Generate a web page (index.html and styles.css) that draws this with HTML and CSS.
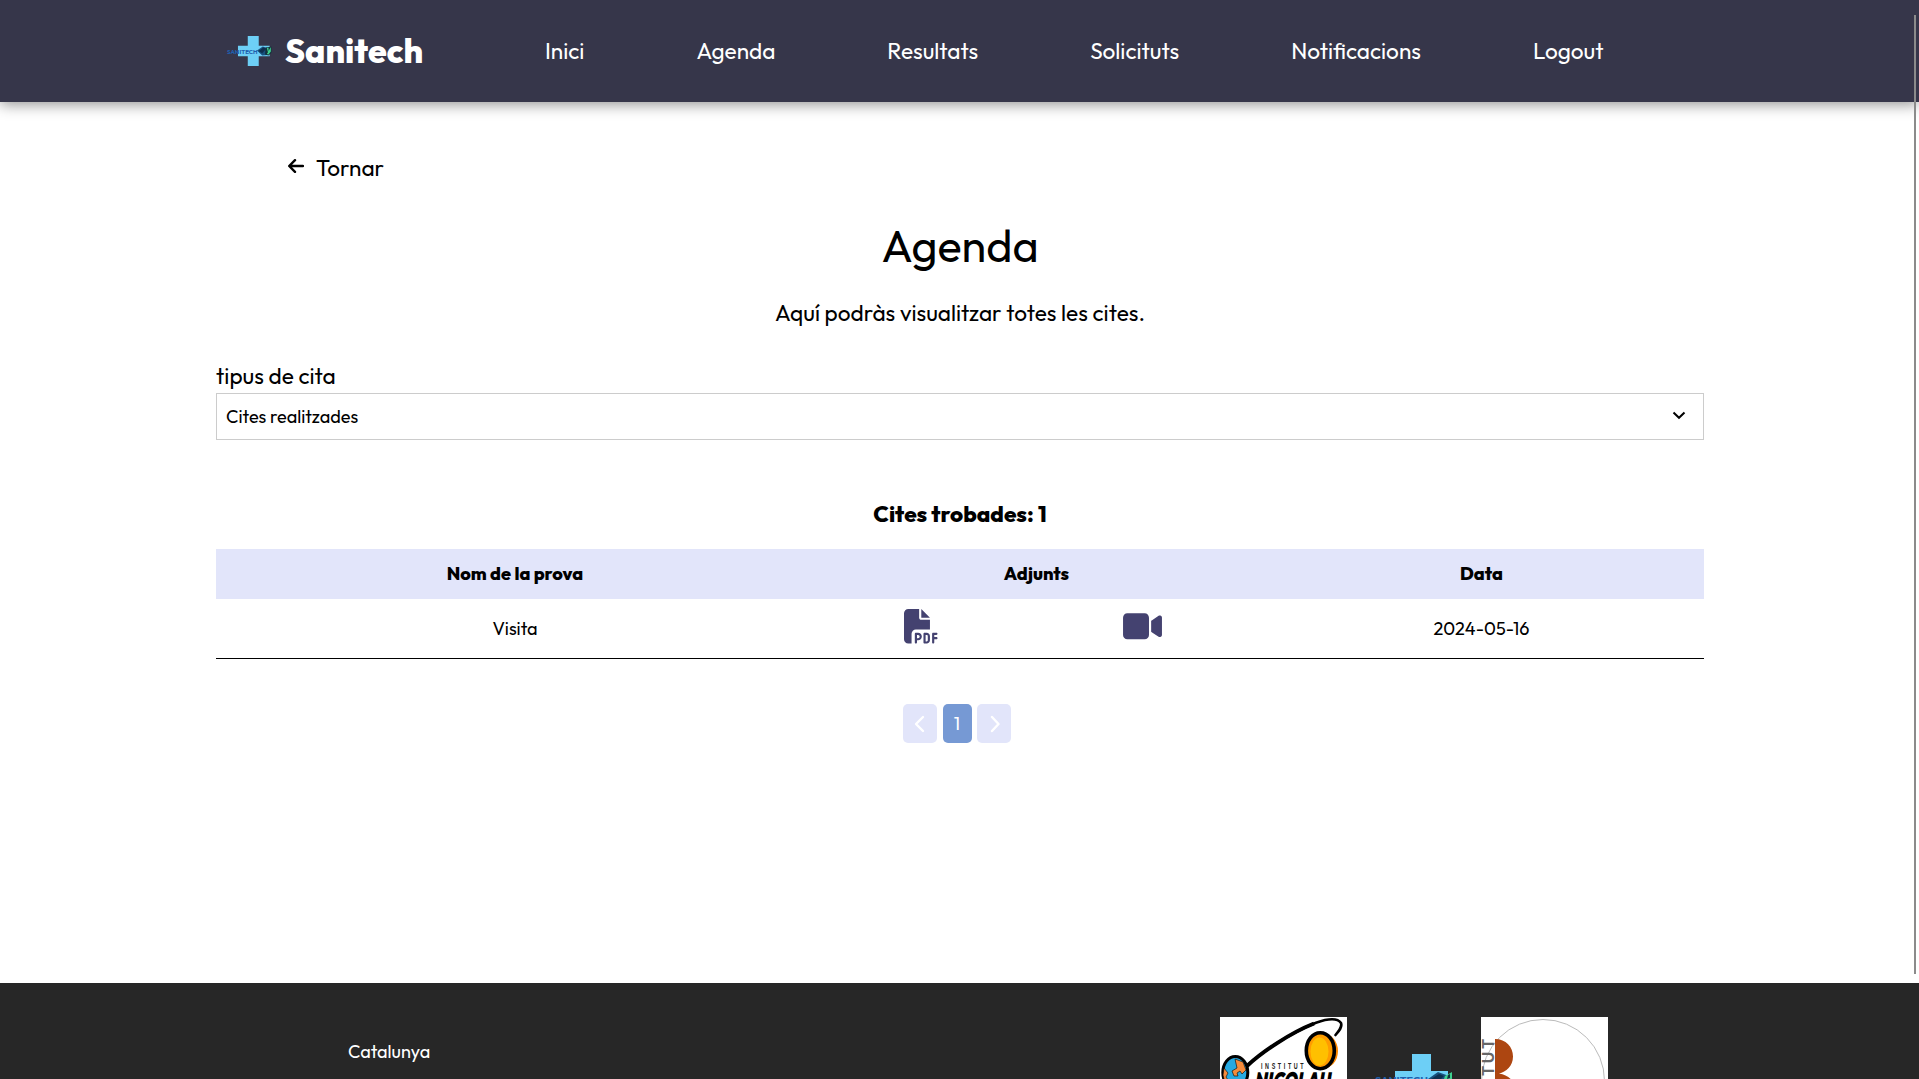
FILE: index.html
```
<!DOCTYPE html>
<html lang="ca">
<head>
<meta charset="utf-8">
<title>Sanitech - Agenda</title>
<link rel="stylesheet" href="styles.css">
</head>
<body>
<header class="header">
  <a class="brand">
    <svg class="brand-logo" viewBox="0 0 80 52">
      <path fill="#6dcff6" d="M37 0H56V17H75V35H56V52H37V35H20V17H37Z"/>
      <text x="1" y="30.5" class="mark-text" textLength="53" lengthAdjust="spacingAndGlyphs">SANITECH</text>
      <path fill="#17517e" d="M53 25L63 18L74 22L71 33L62 34Z"/>
      <path fill="#0d2f4f" d="M56 26L64 20L69 22L62 30Z"/>
      <path fill="#12303c" d="M68 20L78 18V29L73 34L67 32Z"/>
      <path fill="#3ecf8e" d="M70 21L73 20V26L77 19V27L73 32L70 31L72 28Z"/>
    </svg>
    <span>Sanitech</span>
  </a>
  <nav class="nav">
    <a>Inici</a><a>Agenda</a><a>Resultats</a><a>Solicituts</a><a>Notificacions</a><a>Logout</a>
  </nav>
</header>

<main class="main">
  <a class="back">
    <svg width="16" height="14" viewBox="0 0 16 14"><path d="M15 7H1.5M7 1.2L1.2 7L7 12.8" fill="none" stroke="#000" stroke-width="2.4" stroke-linecap="round" stroke-linejoin="round"/></svg>
    <span>Tornar</span>
  </a>
  <h1 class="title">Agenda</h1>
  <p class="intro">Aquí podràs visualitzar totes les cites.</p>
  <label class="label">tipus de cita</label>
  <div class="select">
    <span>Cites realitzades</span>
    <svg width="14" height="9" viewBox="0 0 14 9"><path d="M1.5 1.5L7 6.8L12.5 1.5" fill="none" stroke="#000" stroke-width="2"/></svg>
  </div>
  <h2 class="count">Cites trobades: 1</h2>
  <div class="table">
    <div class="row head"><span>Nom de la prova</span><span>Adjunts</span><span>Data</span></div>
    <div class="row">
      <span>Visita</span>
      <span class="files">
        <svg width="34.6" height="34.6" viewBox="0 0 512 512"><path fill="#444270" d="M0 64C0 28.7 28.7 0 64 0H224V128c0 17.7 14.3 32 32 32H384V304H176c-35.3 0-64 28.7-64 64V512H64c-35.3 0-64-28.7-64-64V64zm384 64H256V0L384 128zM176 352h32c30.9 0 56 25.1 56 56s-25.1 56-56 56H192v32c0 8.8-7.2 16-16 16s-16-7.2-16-16V448 368c0-8.8 7.2-16 16-16zm32 80c13.3 0 24-10.7 24-24s-10.7-24-24-24H192v48h16zm96-80h32c26.5 0 48 21.5 48 48v64c0 26.5-21.5 48-48 48H304c-8.8 0-16-7.2-16-16V368c0-8.8 7.2-16 16-16zm32 128c8.8 0 16-7.2 16-16V400c0-8.8-7.2-16-16-16H320v96h16zm80-112c0-8.8 7.2-16 16-16h48c8.8 0 16 7.2 16 16s-7.2 16-16 16H448v32h32c8.8 0 16 7.2 16 16s-7.2 16-16 16H448v48c0 8.8-7.2 16-16 16s-16-7.2-16-16V432 368z"/></svg>
        <svg width="39" height="34.6" viewBox="0 0 576 512"><path fill="#444270" d="M0 128C0 92.7 28.7 64 64 64H320c35.3 0 64 28.7 64 64V384c0 35.3-28.7 64-64 64H64c-35.3 0-64-28.7-64-64V128zM559.1 99.8c10.4 5.6 16.9 16.4 16.9 28.2V384c0 11.8-6.5 22.6-16.9 28.2s-23 5-32.9-1.6l-96-64L416 337.1V320 192 174.9l14.2-9.5 96-64c9.8-6.5 22.4-7.2 32.9-1.6z"/></svg>
      </span>
      <span>2024-05-16</span>
    </div>
  </div>
  <div class="pages">
    <a class="page"><svg width="12" height="18" viewBox="0 0 12 18"><path d="M9 2L2 9L9 16" fill="none" stroke="#fff" stroke-width="2.4" stroke-linecap="round" stroke-linejoin="round"/></svg></a>
    <a class="page current">1</a>
    <a class="page"><svg width="12" height="18" viewBox="0 0 12 18"><path d="M4 2L10.500 9L4 16" fill="none" stroke="#fff" stroke-width="2.4" stroke-linecap="round" stroke-linejoin="round"/></svg></a>
  </div>
</main>

<footer class="footer">
  <span class="place">Catalunya</span>
  <div class="partners">
    <svg width="127" height="62" viewBox="0 0 127 62">
      <rect width="127" height="62" fill="#fff"/>
      <ellipse cx="103.5" cy="34" rx="14.5" ry="17.5" fill="#ff8a00"/>
      <ellipse cx="100.3" cy="33.7" rx="14" ry="18" fill="#ff9c00" stroke="#000" stroke-width="3.6"/>
      <ellipse cx="99.5" cy="34.5" rx="9" ry="14" fill="#ffc000"/>
      <path d="M27 49C42 35 70 16 96 5.700C110 .8 118 1.500 121 6C122.500 10 119 14 115.500 18" fill="none" stroke="#000" stroke-width="2.600" stroke-linecap="round"/>
      <path d="M27 49C42 35 70 16 94 6.500" fill="none" stroke="#000" stroke-width="4"/>
      <ellipse cx="15.300" cy="55.500" rx="12.500" ry="16" fill="#27a9e1" stroke="#000" stroke-width="3"/>
      <path fill="#f58b3c" stroke="#000" stroke-width=".6" d="M15 42L23 45L26 53L22 57L20 54L17 56L18 59L14 59L12 54L17 51ZM4 51L8 56L6 60L10 66H5L3 58Z"/>
      <text transform="translate(41 52.300) scale(.6 1)" class="institute" textLength="71">INSTITUT</text>
      <text x="34" y="73" class="copernic" textLength="76" lengthAdjust="spacingAndGlyphs">NICOLAU</text>
    </svg>
    <div class="partner-mid">
      <svg width="80" height="25" viewBox="0 0 80 25">
        <path fill="#6dcff6" d="M37 0H56V17H73V25H20V17H37Z"/>
        <text x="0" y="30" class="mark-text" textLength="53" lengthAdjust="spacingAndGlyphs">SANITECH</text>
        <path fill="#17517e" d="M53 25L63 18L74 22L71 33L62 34Z"/>
        <path fill="#0d2f4f" d="M56 25L64 20L69 22L64 27Z"/>
        <path fill="#3ecf8e" d="M70 22L77 18V25H69Z"/>
        <path fill="#12303c" d="M73 21L75 20V24L72 25Z"/>
      </svg>
    </div>
    <svg width="127" height="62" viewBox="0 0 127 62">
      <rect width="127" height="62" fill="#fff"/>
      <circle cx="62" cy="64" r="61.500" fill="none" stroke="#bbb"/>
      <text transform="translate(12.500 114) rotate(-90)" class="vertical" textLength="92">INSTITUT</text>
      <path fill="#ad4611" d="M14 22C25 22 32 30 32 39.500S25 55 18 56.500C28 58 35 65 35 75S28 92 14 92Z"/>
    </svg>
  </div>
</footer>
<div class="scrollbar"></div>
</body>
</html>
```

FILE: styles.css
```
* { box-sizing: border-box; }
body {
  margin: 0;
  height: 1079px;
  overflow: hidden;
  display: flex;
  flex-direction: column;
  background: #fff;
  color: #000;
  font: 18.1px/1.26 Outfit, Lato, sans-serif;
}
svg { display: block; flex: none; }

.header {
  flex: none;
  height: 102px;
  padding-left: 226px;
  display: flex;
  align-items: center;
  background: #36364a;
  color: #fff;
  box-shadow: 0 2px 14px rgba(0, 0, 0, .45);
}
.brand {
  width: 319px;
  display: flex;
  align-items: center;
  gap: 12px;
  font-size: 33.75px;
  font-weight: 800;
}
.brand-logo { width: 47px; height: 30px; }
.nav { display: flex; gap: 112px; font-size: 22.6px; }
.mark-text { font: 700 9.5px Outfit, sans-serif; fill: #1f5fae; }

.main {
  flex: none;
  height: 881px;
  padding: 52px 0 0 216px;
  display: flex;
  flex-direction: column;
}
.main > * { width: 1488px; }
.back {
  padding-left: 72px;
  height: 29px;
  display: flex;
  gap: 12px;
  font-size: 22.6px;
}
.back svg { margin-top: 5px; }
.title {
  margin: 35px 0 0;
  height: 57px;
  font-size: 45px;
  font-weight: 400;
  text-align: center;
}
.intro {
  margin: 24px 0 0;
  height: 29px;
  font-size: 22.6px;
  text-align: center;
}
.label { margin-top: 34px; height: 31px; font-size: 22.6px; }
.select {
  height: 47px;
  padding: 1px 17px 0 9px;
  border: 1px solid #ccc;
  display: flex;
  align-items: center;
  justify-content: space-between;
}
.select svg { margin-bottom: 3px; }
.count {
  margin: 60px 0 0;
  height: 49px;
  font-size: 22.5px;
  font-weight: 800;
  text-align: center;
}
.row {
  height: 60px;
  padding-top: 1px;
  display: grid;
  grid-template-columns: 598px 445px 445px;
  align-items: center;
  text-align: center;
  border-bottom: 1px solid #000;
}
.head {
  height: 50px;
  padding: 0;
  border: 0;
  background: #e2e5fa;
  font-weight: 800;
}
.files {
  display: flex;
  justify-content: space-between;
  padding: 0 97px 5px 90px;
}
.pages { margin-top: 45px; padding-left: 687px; display: flex; gap: 5.5px; }
.page {
  width: 34px;
  height: 39px;
  border-radius: 5px;
  display: flex;
  align-items: center;
  justify-content: center;
  background: #e2e5fa;
  color: #fff;
}
.current { width: 29px; padding-top: 1px; background: #7699d4; }

.footer {
  flex: none;
  height: 96px;
  padding: 34px 311px 0 348px;
  display: flex;
  justify-content: space-between;
  background: #272727;
  color: #fff;
}
.place { margin-top: 24px; }
.partners { display: flex; gap: 3.5px; }
.partner-mid { width: 127px; padding: 37px 0 0 24px; }
.institute { font: 700 9px "Liberation Sans", sans-serif; fill: #222; }
.copernic { font: italic 900 25px Outfit, sans-serif; fill: #000; }
.vertical { font: 700 16px "Liberation Sans", sans-serif; fill: #666; }

.scrollbar {
  position: absolute;
  left: 1914px;
  top: 15px;
  width: 2px;
  height: 959px;
  background: #8b8b8b;
}
```
